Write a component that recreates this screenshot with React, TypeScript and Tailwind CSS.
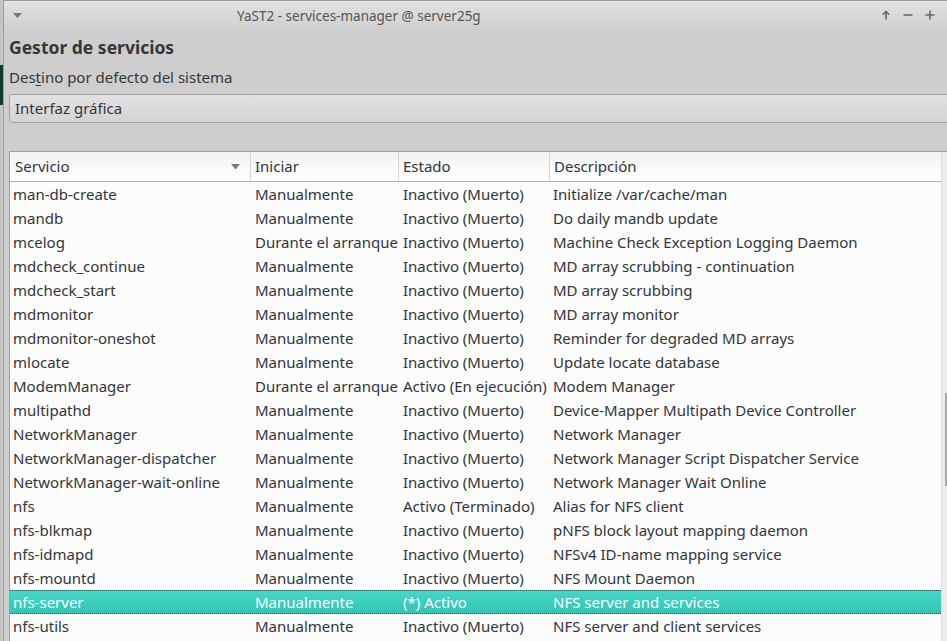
import React from 'react';

type Row = { name: string; start: string; state: string; desc: string; selected?: boolean };

const ROWS: Row[] = [
  { name: 'man-db-create', start: 'Manualmente', state: 'Inactivo (Muerto)', desc: 'Initialize /var/cache/man' },
  { name: 'mandb', start: 'Manualmente', state: 'Inactivo (Muerto)', desc: 'Do daily mandb update' },
  { name: 'mcelog', start: 'Durante el arranque', state: 'Inactivo (Muerto)', desc: 'Machine Check Exception Logging Daemon' },
  { name: 'mdcheck_continue', start: 'Manualmente', state: 'Inactivo (Muerto)', desc: 'MD array scrubbing - continuation' },
  { name: 'mdcheck_start', start: 'Manualmente', state: 'Inactivo (Muerto)', desc: 'MD array scrubbing' },
  { name: 'mdmonitor', start: 'Manualmente', state: 'Inactivo (Muerto)', desc: 'MD array monitor' },
  { name: 'mdmonitor-oneshot', start: 'Manualmente', state: 'Inactivo (Muerto)', desc: 'Reminder for degraded MD arrays' },
  { name: 'mlocate', start: 'Manualmente', state: 'Inactivo (Muerto)', desc: 'Update locate database' },
  { name: 'ModemManager', start: 'Durante el arranque', state: 'Activo (En ejecución)', desc: 'Modem Manager' },
  { name: 'multipathd', start: 'Manualmente', state: 'Inactivo (Muerto)', desc: 'Device-Mapper Multipath Device Controller' },
  { name: 'NetworkManager', start: 'Manualmente', state: 'Inactivo (Muerto)', desc: 'Network Manager' },
  { name: 'NetworkManager-dispatcher', start: 'Manualmente', state: 'Inactivo (Muerto)', desc: 'Network Manager Script Dispatcher Service' },
  { name: 'NetworkManager-wait-online', start: 'Manualmente', state: 'Inactivo (Muerto)', desc: 'Network Manager Wait Online' },
  { name: 'nfs', start: 'Manualmente', state: 'Activo (Terminado)', desc: 'Alias for NFS client' },
  { name: 'nfs-blkmap', start: 'Manualmente', state: 'Inactivo (Muerto)', desc: 'pNFS block layout mapping daemon' },
  { name: 'nfs-idmapd', start: 'Manualmente', state: 'Inactivo (Muerto)', desc: 'NFSv4 ID-name mapping service' },
  { name: 'nfs-mountd', start: 'Manualmente', state: 'Inactivo (Muerto)', desc: 'NFS Mount Daemon' },
  { name: 'nfs-server', start: 'Manualmente', state: '(*) Activo', desc: 'NFS server and services', selected: true },
  { name: 'nfs-utils', start: 'Manualmente', state: 'Inactivo (Muerto)', desc: 'NFS server and client services' },
];

const COLS = 'grid grid-cols-[241px_148px_151px_1fr]';

export default function App() {
  return (
    <div className="flex h-[641px] w-[947px] overflow-hidden bg-[#c4c4c4] font-['Noto_Sans',sans-serif] text-[15px] text-[#31363b]">
      {/* desktop edge */}
      <div className="flex w-[3px] flex-col">
        <div className="h-[65px]" />
        <div className="h-[40px] bg-[#0e3a30]" />
      </div>

      {/* window */}
      <div className="flex flex-1 flex-col border-l border-t border-[#9c9c9c] bg-[#cecece]">
        {/* title bar */}
        <div className="flex h-[28px] items-center bg-gradient-to-b from-[#e2e2e2] to-[#d0d0d0] pl-[9px] pr-[12px]">
          <svg width="9" height="6" viewBox="0 0 9 6" className="mt-[1px]">
            <path d="M0 0h9L4.5 5z" fill="#777" />
          </svg>
          <div className="flex-1 pl-[215px] pt-[2px] text-[13.5px] text-[#555]">
            YaST2 - services-manager @ server25g
          </div>
          <div className="flex items-center gap-[12px] text-[#6a6a6a]">
            <svg width="10" height="10" viewBox="0 0 10 10">
              <path d="M5 1.5v8M1.8 4.7L5 1.5l3.2 3.2" stroke="#6a6a6a" strokeWidth="1.6" fill="none" />
            </svg>
            <svg width="10" height="10" viewBox="0 0 10 10">
              <path d="M0.5 5h9" stroke="#6a6a6a" strokeWidth="1.6" />
            </svg>
            <svg width="10" height="10" viewBox="0 0 10 10">
              <path d="M0.5 5h9M5 0.5v9" stroke="#6a6a6a" strokeWidth="1.6" />
            </svg>
          </div>
        </div>

        {/* content */}
        <div className="flex flex-1 flex-col pl-[5px]">
          <div className="mt-[6px] text-[17.5px] font-bold leading-[24px] text-[#363636]">Gestor de servicios</div>
          <div className="mt-[8px] leading-[20px] text-[#363636]">
            Des<span className="underline underline-offset-2">t</span>ino por defecto del sistema
          </div>
          <div className="-mr-[4px] mt-[7px] flex h-[29px] items-center rounded-[3px] border border-[#a2a2a2] bg-gradient-to-b from-[#e1e1e1] to-[#d4d4d4] pl-[5px] text-[#363636]">
            Interfaz gráfica
          </div>

          {/* table */}
          <div className="mt-[28px] flex flex-1 border-l border-t border-[#9e9e9e]">
            <div className="flex flex-1 flex-col bg-[#fcfcfc]">
              <div className={`${COLS} h-[30px] border-b border-[#b0b0b0] bg-gradient-to-b from-[#f2f2f2] to-[#ffffff] text-[#31363b]`}>
                <div className="flex items-center justify-between border-r border-[#d6d6d6] pl-[5px] pr-[10px]">
                  <span>Servicio</span>
                  <svg width="9" height="6" viewBox="0 0 9 6">
                    <path d="M0 0h9L4.5 5.5z" fill="#7a7a7a" />
                  </svg>
                </div>
                <div className="flex items-center border-r border-[#d6d6d6] pl-[4px]">Iniciar</div>
                <div className="flex items-center border-r border-[#d6d6d6] pl-[4px]">Estado</div>
                <div className="flex items-center pl-[4px]">Descripción</div>
              </div>
              {ROWS.map((r) => (
                <div
                  key={r.name}
                  className={`${COLS} h-[24px] items-center whitespace-nowrap ${
                    r.selected
                      ? 'border-y border-dotted border-[#1f5d56] bg-gradient-to-b from-[#44d8c7] to-[#35c4b3] text-white'
                      : 'text-[#31363b]'
                  }`}
                >
                  <div className="pl-[3px]">{r.name}</div>
                  <div className="pl-[4px]">{r.start}</div>
                  <div className="pl-[4px]">{r.state}</div>
                  <div className="pl-[3px]">{r.desc}</div>
                </div>
              ))}
            </div>
            {/* scrollbar */}
            <div className="flex w-[6px] flex-col border-l border-[#dcdcdc] bg-[#ececec]">
              <div className="h-[241px]" />
              <div className="ml-auto h-[93px] w-[2px] bg-[#a8a8a8]" />
            </div>
          </div>
        </div>
      </div>
    </div>
  );
}
